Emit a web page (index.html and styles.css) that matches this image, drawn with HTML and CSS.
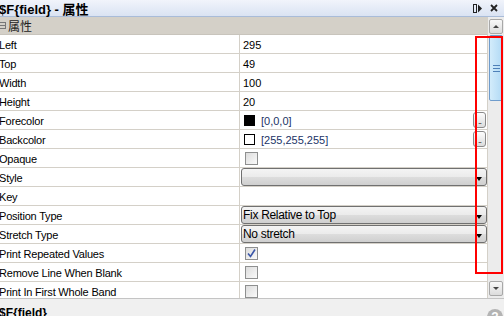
FILE: index.html
```html
<!DOCTYPE html>
<html lang="zh-CN">
<head>
    <meta charset="UTF-8">
    <title>$F{field} - 属性</title>
    <link rel="stylesheet" href="styles.css">
</head>
<body>
    <div class="panel">
        <div class="titlebar">
            <span class="title">$F{field} - 属性</span>
            <div class="title-tools">
                <svg width="9" height="9" viewBox="0 0 9 9"><rect x="0.5" y="0.5" width="3" height="8" fill="none" stroke="#222"/><path d="M5 0.5 L9 4.5 L5 8.5 Z" fill="#222"/></svg>
                <svg width="8" height="8" viewBox="0 0 8 8"><path d="M1 1 L7 7 M7 1 L1 7" stroke="#222" stroke-width="1.8"/></svg>
            </div>
        </div>

        <div class="main">
            <div class="grid">
                <div class="category"><span class="toggle"></span>属性</div>

                <div class="row"><div class="name">Left</div><div class="value">295</div></div>
                <div class="row"><div class="name">Top</div><div class="value">49</div></div>
                <div class="row"><div class="name">Width</div><div class="value">100</div></div>
                <div class="row"><div class="name">Height</div><div class="value">20</div></div>
                <div class="row">
                    <div class="name">Forecolor</div>
                    <div class="value"><span class="swatch black"></span><span class="color-text">[0,0,0]</span><span class="dots">..</span></div>
                </div>
                <div class="row">
                    <div class="name">Backcolor</div>
                    <div class="value"><span class="swatch"></span><span class="color-text">[255,255,255]</span><span class="dots">..</span></div>
                </div>
                <div class="row"><div class="name">Opaque</div><div class="value"><span class="check"></span></div></div>
                <div class="row"><div class="name">Style</div><div class="value"><div class="combo"><span></span><i class="arrow"></i></div></div></div>
                <div class="row"><div class="name">Key</div><div class="value"></div></div>
                <div class="row"><div class="name">Position Type</div><div class="value"><div class="combo"><span>Fix Relative to Top</span><i class="arrow"></i></div></div></div>
                <div class="row"><div class="name">Stretch Type</div><div class="value"><div class="combo"><span>No stretch</span><i class="arrow"></i></div></div></div>
                <div class="row">
                    <div class="name">Print Repeated Values</div>
                    <div class="value"><span class="check"><svg width="11" height="11" viewBox="0 0 11 11"><path d="M2 5.5 L4.5 8.5 L9 1.5" fill="none" stroke="#3a56a8" stroke-width="1.6"/></svg></span></div>
                </div>
                <div class="row"><div class="name">Remove Line When Blank</div><div class="value"><span class="check"></span></div></div>
                <div class="row"><div class="name">Print In First Whole Band</div><div class="value"><span class="check"></span></div></div>
            </div>

            <div class="scrollbar">
                <div class="sb-btn"><i class="up"></i></div>
                <div class="sb-track">
                    <div class="sb-thumb"><span class="grip"></span></div>
                </div>
                <div class="sb-btn"><i class="down"></i></div>
            </div>
        </div>

        <div class="footer">
            <span class="footer-title">$F{field}</span>
            <span class="help">?</span>
        </div>

        <div class="highlight"></div>
    </div>
</body>
</html>
```

FILE: styles.css
```css
* {
    margin: 0;
    padding: 0;
    box-sizing: border-box;
}

body {
    font-family: "Liberation Sans", "Noto Sans CJK SC", sans-serif;
    font-size: 11px;
    color: #000;
    background: #fff;
    overflow: hidden;
}

.panel {
    position: relative;
    width: 504px;
    height: 316px;
    display: flex;
    flex-direction: column;
    overflow: hidden;
}

.titlebar {
    height: 17px;
    flex-shrink: 0;
    display: flex;
    align-items: center;
    justify-content: space-between;
    background: linear-gradient(#f1f4fb, #dae3f3);
    border-bottom: 1px solid #a9bcd9;
}

.title {
    font-weight: bold;
    font-size: 13px;
    margin-left: -1px;
}

.title-tools {
    display: flex;
    align-items: center;
    gap: 8px;
    margin-right: 6px;
}

.main {
    flex: 1;
    display: flex;
    min-height: 0;
}

.grid {
    flex: 1;
    overflow: hidden;
    border-right: 1px solid #d4d0c8;
}

.category {
    height: 18px;
    background: #d4d0c8;
    border-bottom: 1px solid #c8c4bc;
    display: flex;
    align-items: center;
    gap: 2px;
    font-family: "Noto Sans CJK SC", sans-serif;
    font-size: 12px;
    color: #222;
}

.toggle {
    width: 7px;
    height: 7px;
    margin-left: -1px;
    border: 1px solid #777;
    border-left: none;
    background: linear-gradient(#777, #777) center / 5px 1px no-repeat;
}

.row {
    height: 19px;
    display: flex;
    border-bottom: 1px solid #d4d0c8;
}

.row:first-of-type {
    margin-top: 0;
}

.name {
    width: 241px;
    flex-shrink: 0;
    border-right: 1px solid #d4d0c8;
    display: flex;
    align-items: center;
    margin-left: -1px;
    padding-top: 1px;
    font-size: 11px;
    letter-spacing: -0.2px;
    white-space: nowrap;
}

.value {
    flex: 1;
    display: flex;
    align-items: center;
    padding-left: 3px;
    padding-top: 1px;
    font-size: 11px;
    position: relative;
}

.swatch {
    width: 11px;
    height: 11px;
    border: 1px solid #000;
    background: #fff;
    margin-left: 1px;
    margin-right: 6px;
}

.swatch.black {
    background: #000;
}

.color-text {
    color: #1b3366;
}

.dots {
    position: absolute;
    right: 1px;
    top: 1px;
    width: 13px;
    height: 16px;
    border: 1px solid #8a8a8a;
    border-radius: 3px;
    background: linear-gradient(#fdfdfd, #dcdcdc);
    font-size: 9px;
    line-height: 16px;
    text-align: center;
    letter-spacing: -1px;
    color: #222;
}

.check {
    width: 13px;
    height: 13px;
    margin-left: 2px;
    border: 1px solid #8e8f8f;
    background: linear-gradient(135deg, #dcdcdc, #fafafa);
    display: flex;
    align-items: center;
    justify-content: center;
}

.combo {
    flex: 1;
    height: 18px;
    margin-left: -2px;
    margin-top: -1px;
    border: 1px solid #707070;
    border-radius: 3px;
    background: linear-gradient(#f4f4f4 0%, #ebebeb 50%, #dddddd 51%, #cfcfcf 100%);
    display: flex;
    align-items: center;
    justify-content: space-between;
    padding: 0 4px 0 1px;
    font-size: 12px;
    letter-spacing: -0.3px;
}

.arrow {
    width: 0;
    height: 0;
    border-left: 3px solid transparent;
    border-right: 3px solid transparent;
    border-top: 4px solid #000;
    margin-top: 3px;
}

.scrollbar {
    width: 16px;
    flex-shrink: 0;
    background: #ececec;
    display: flex;
    flex-direction: column;
    padding: 2px 1px;
}

.sb-btn {
    height: 15px;
    border: 1px solid #a8a8a8;
    border-radius: 2px;
    background: linear-gradient(#f8f8f8, #dcdcdc);
    display: flex;
    align-items: center;
    justify-content: center;
}

.sb-btn .up {
    width: 0;
    height: 0;
    border-left: 3px solid transparent;
    border-right: 3px solid transparent;
    border-bottom: 3px solid #444;
}

.sb-btn .down {
    width: 0;
    height: 0;
    border-left: 3px solid transparent;
    border-right: 3px solid transparent;
    border-top: 3px solid #444;
}

.sb-track {
    flex: 1;
    padding-top: 1px;
}

.sb-thumb {
    height: 66px;
    border: 1px solid #6f9ccc;
    border-radius: 2px;
    background: linear-gradient(90deg, #d3ecfb, #b2daf5);
    display: flex;
    align-items: center;
    justify-content: center;
}

.grip {
    width: 7px;
    height: 7px;
    background: repeating-linear-gradient(#4e80b8 0 1px, transparent 1px 3px);
}

.footer {
    height: 18px;
    flex-shrink: 0;
    background: #f0f0f0;
    border-top: 1px solid #c4c4c4;
    position: relative;
}

.footer-title {
    position: absolute;
    left: -1px;
    top: 7px;
    font-weight: bold;
    font-size: 12px;
}

.help {
    position: absolute;
    left: 487px;
    top: 10px;
    width: 16px;
    height: 16px;
    border-radius: 50%;
    background: #b4b4b4;
    color: #fff;
    font-weight: bold;
    font-size: 12px;
    text-align: center;
    line-height: 16px;
}

.highlight {
    position: absolute;
    left: 475px;
    top: 36px;
    width: 28px;
    height: 238px;
    border: 2px solid #ff0000;
    pointer-events: none;
}
```
